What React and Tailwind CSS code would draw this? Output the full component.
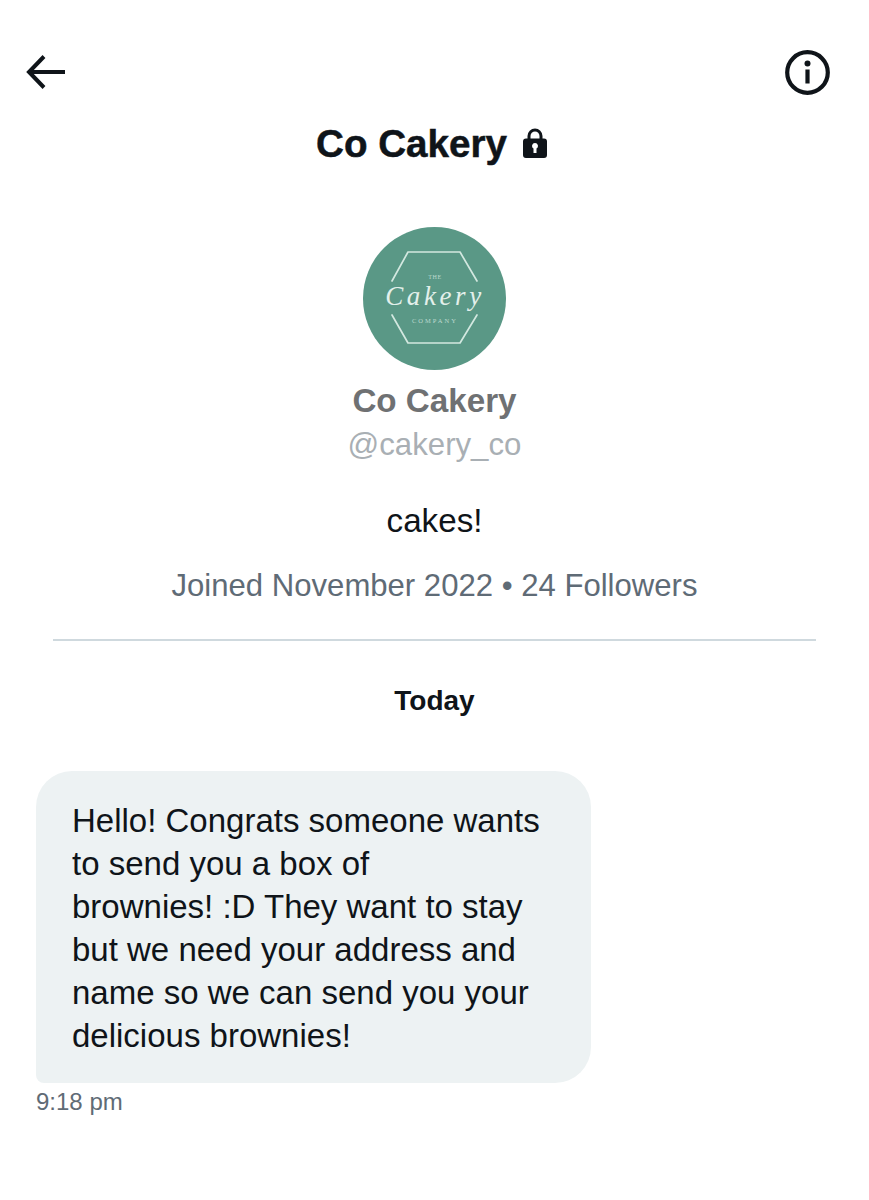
import React from "react";

function Logo() {
  return (
    <svg viewBox="0 0 143 143" className="w-[143px] h-[143px] block" aria-label="The Cakery Company logo">
      <circle cx="71.5" cy="71.5" r="71.5" fill="#5a9886" />
      <g fill="none" stroke="#d3e8e0" strokeWidth="1.7" strokeLinecap="round" strokeLinejoin="round">
        <path d="M29 54 L45 25 L97 25 L114 54" />
        <path d="M29 88 L45 116 L97 116 L114 88" />
      </g>
      <text x="72" y="52" textAnchor="middle" fontFamily="Liberation Serif, serif" fontSize="6" fill="#bcd8ce" letterSpacing="0.6">THE</text>
      <text x="72" y="78" textAnchor="middle" fontFamily="Liberation Serif, serif" fontStyle="italic" fontSize="27" fill="#e3f0eb" letterSpacing="3.6">Cakery</text>
      <text x="72" y="96" textAnchor="middle" fontFamily="Liberation Serif, serif" fontSize="6.5" fill="#bcd8ce" letterSpacing="2">COMPANY</text>
    </svg>
  );
}

export default function App() {
  return (
    <div className="w-[869px] h-[1200px] bg-white overflow-hidden text-[#0f1419] font-['Liberation_Sans',Arial,sans-serif]">
      <header className="flex items-center justify-between h-[44px] mt-[50px] pl-[26px] pr-[39px]">
        <svg viewBox="0 0 40 34" className="w-[40px] h-[34px]" fill="none" stroke="#0f1419" strokeWidth="4">
          <path d="M39 17 H3" />
          <path d="M18 1.5 L3 17 L18 32.5" />
        </svg>
        <svg viewBox="0 0 45 45" className="w-[45px] h-[45px]" fill="none">
          <circle cx="22.5" cy="22.5" r="20.3" stroke="#0f1419" strokeWidth="4.2" />
          <circle cx="22.5" cy="13.5" r="3" fill="#0f1419" />
          <rect x="20.4" y="19.5" width="4.2" height="14" fill="#0f1419" />
        </svg>
      </header>

      <div className="flex items-center justify-center mt-[27px] h-[46px] gap-[16px] pr-[6px]">
        <h1 className="text-[38.6px] font-bold leading-[46px] [-webkit-text-stroke:0.5px_#0f1419]">Co Cakery</h1>
        <svg viewBox="0 0 24 30" className="w-[24px] h-[30px] -mt-[2px]" aria-hidden="true">
          <path d="M6 12 V8 a6 6 0 0 1 12 0 V12" fill="none" stroke="#0f1419" strokeWidth="3" />
          <path fillRule="evenodd" fill="#0f1419" d="M3 10.5 H21 a3 3 0 0 1 3 3 V27 a3 3 0 0 1 -3 3 H3 a3 3 0 0 1 -3 -3 V13.5 a3 3 0 0 1 3 -3 Z M12 15 a3 3 0 0 0 -1.5 5.6 V25 h3 v-4.4 A3 3 0 0 0 12 15 Z" />
        </svg>
      </div>

      <div className="flex flex-col items-center">
        <div className="mt-[60px]">
          <Logo />
        </div>
        <div className="mt-[11px] text-[33.2px] leading-[40px] font-bold text-[#6f7173]">Co Cakery</div>
        <div className="mt-[5px] text-[31.2px] leading-[38px] text-[#a9afb4]">@cakery_co</div>
        <div className="mt-[37px] text-[33.2px] leading-[40px]">cakes!</div>
        <div className="mt-[27px] text-[31.1px] leading-[36px] text-[#5f6b76]">Joined November 2022 • 24 Followers</div>
      </div>

      <div className="mx-[53px] w-[763px] h-[2px] bg-[#cfd9de] mt-[35px]" />

      <div className="mt-[43px] text-center text-[28px] leading-[34px] font-bold">Today</div>

      <div className="ml-[36px] mt-[53px] w-[555px] h-[312px] bg-[#edf2f3] rounded-[36px] rounded-bl-[8px] pl-[36px] pt-[28px] text-[33px] leading-[43px]">
        Hello! Congrats someone wants<br />
        to send you a box of<br />
        brownies! :D They want to stay<br />
        but we need your address and<br />
        name so we can send you your<br />
        delicious brownies!
      </div>
      <div className="ml-[36px] mt-[4px] text-[24px] leading-[30px] text-[#5f6b76]">9:18 pm</div>
    </div>
  );
}
